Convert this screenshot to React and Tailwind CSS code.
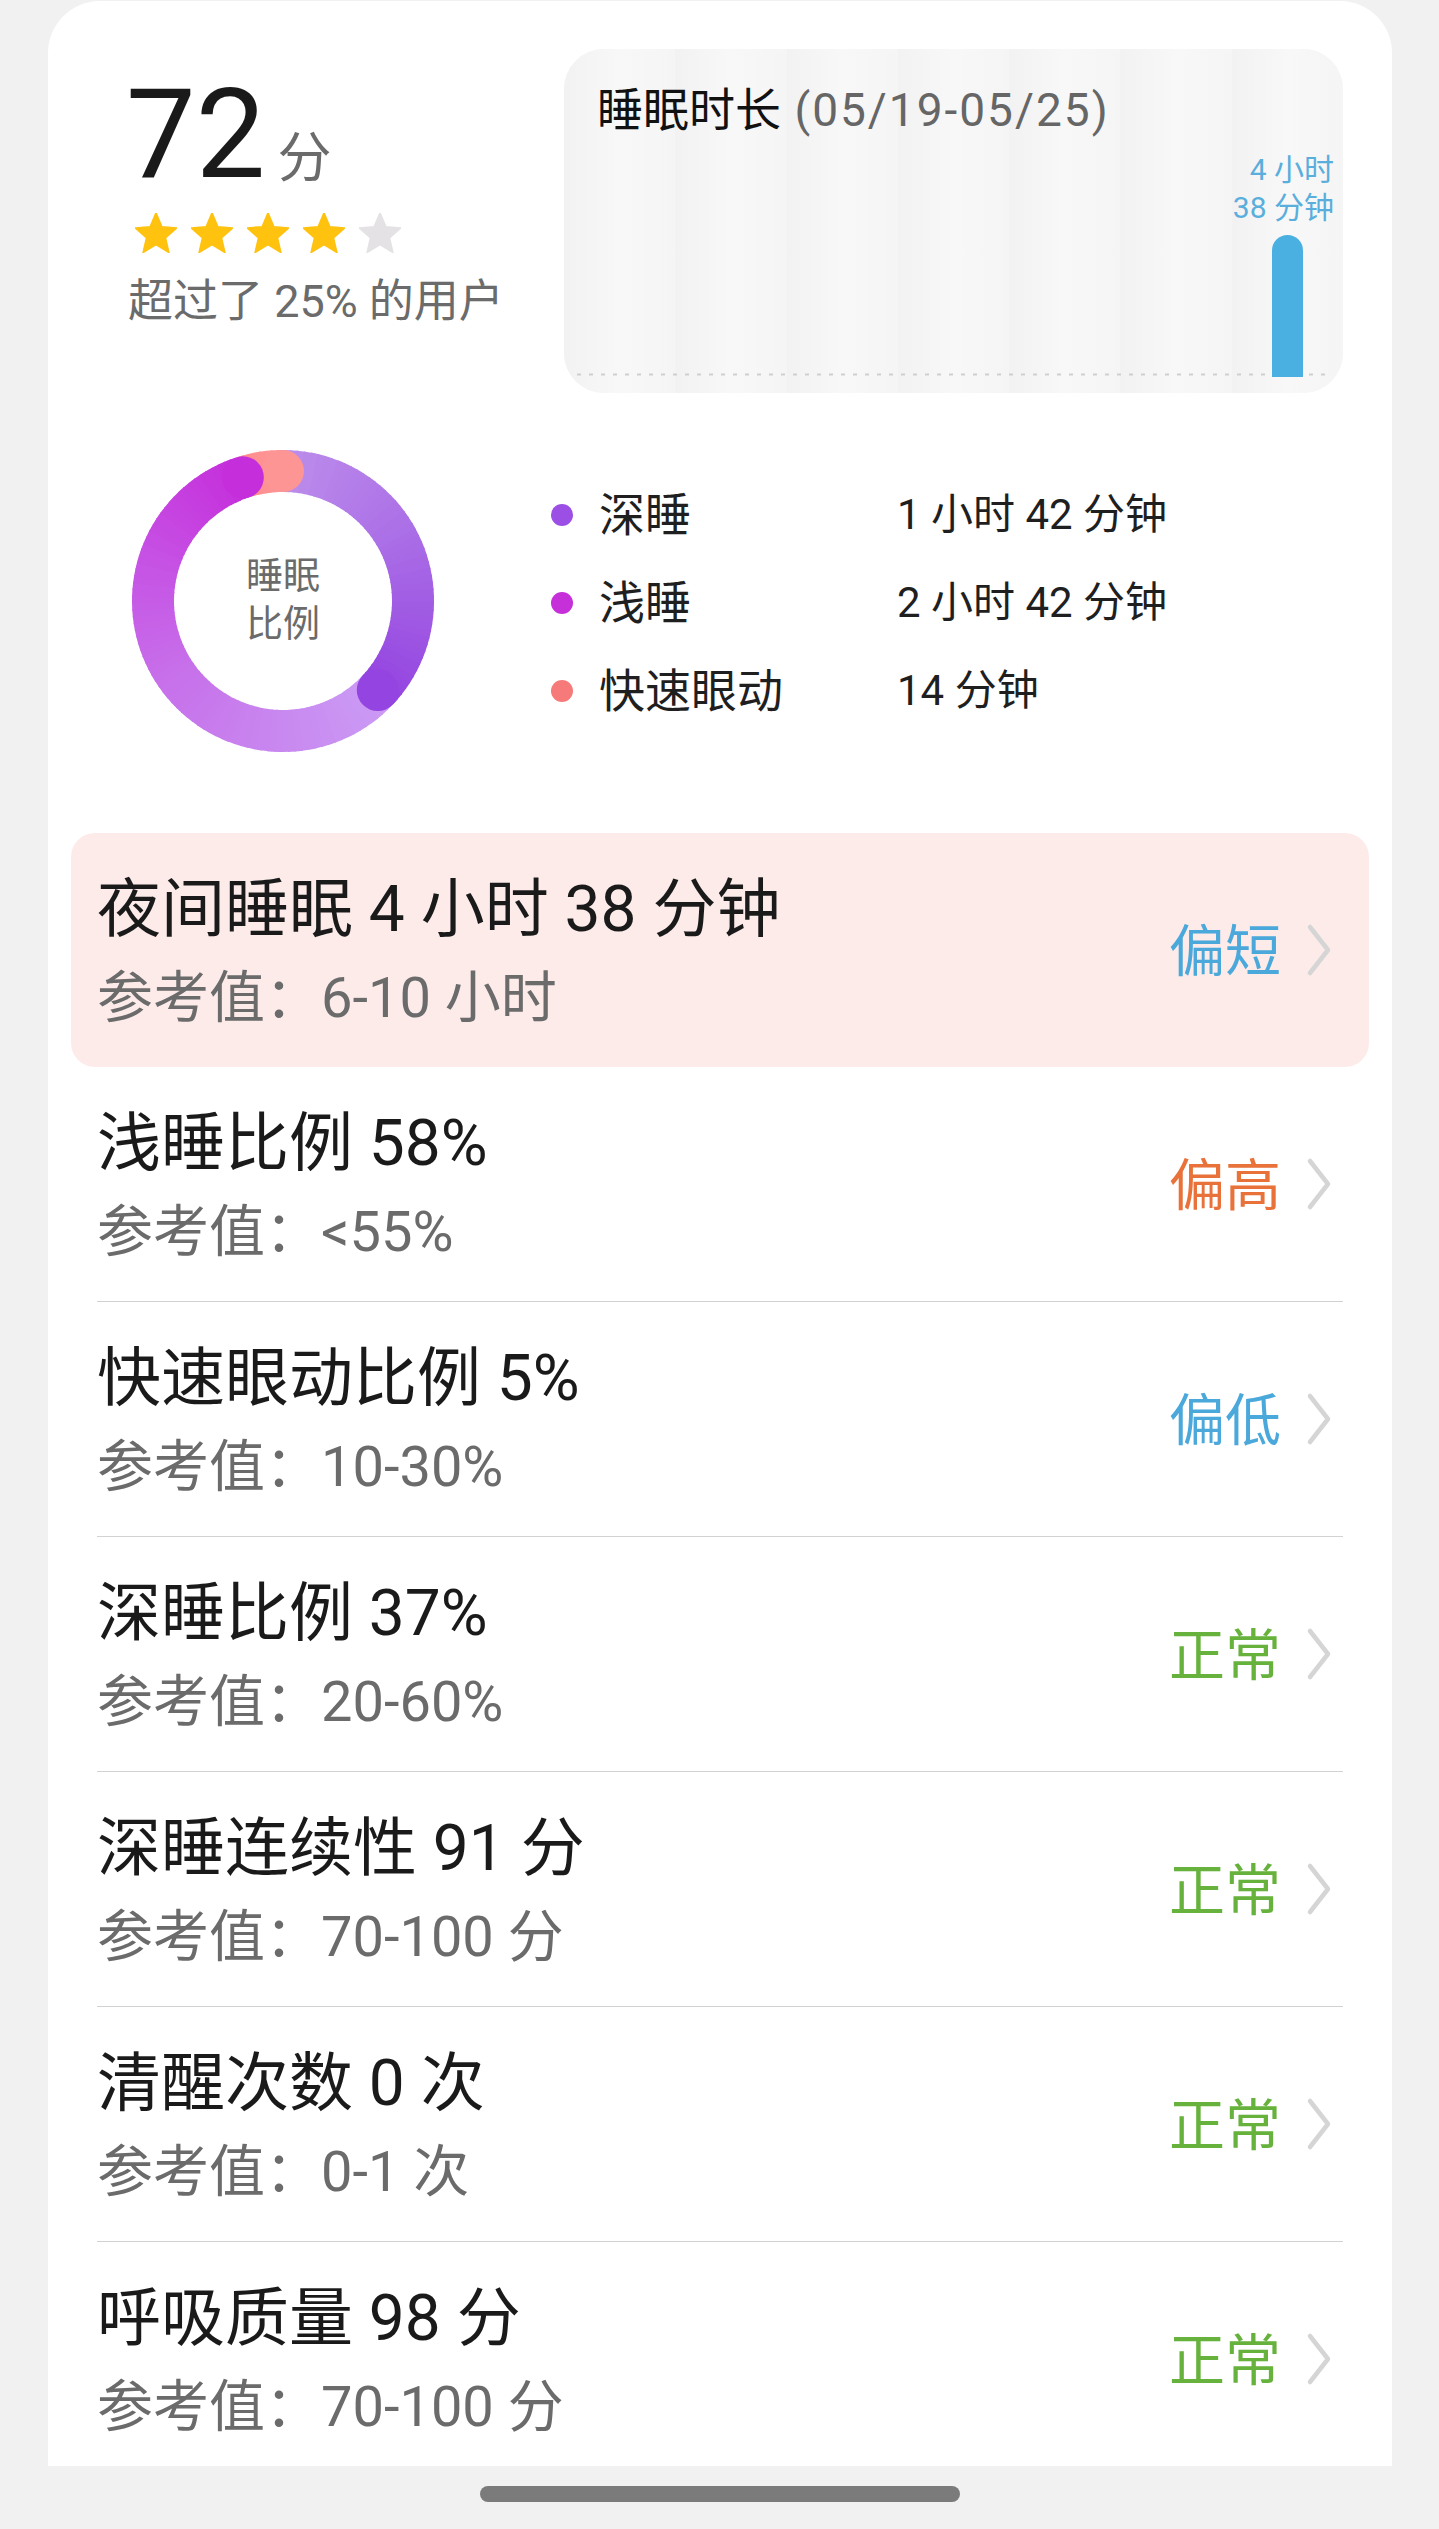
import React from "react";

const hexToRgb = (h) => [parseInt(h.slice(1, 3), 16), parseInt(h.slice(3, 5), 16), parseInt(h.slice(5, 7), 16)];
const rgbToHex = (c) => "#" + c.map((v) => Math.round(v).toString(16).padStart(2, "0")).join("");
const gradAt = (stops, t) => {
  for (let i = 0; i < stops.length - 1; i++) {
    const [c0, p0] = stops[i];
    const [c1, p1] = stops[i + 1];
    if (t <= p1 || i === stops.length - 2) {
      const k = Math.max(0, Math.min(1, (t - p0) / (p1 - p0)));
      const a = hexToRgb(c0);
      const b = hexToRgb(c1);
      return rgbToHex(a.map((v, j) => v + (b[j] - v) * k));
    }
  }
  return stops[0][0];
};

function Donut() {
  const cx = 151, cy = 151, r = 130, sw = 42;
  const pt = (deg) => {
    const a = (deg * Math.PI) / 180;
    return [cx + r * Math.sin(a), cy - r * Math.cos(a)];
  };
  const arc = (a0, a1) => {
    const [x0, y0] = pt(a0);
    const [x1, y1] = pt(a1);
    const large = a1 - a0 > 180 ? 1 : 0;
    return `M${x0} ${y0} A${r} ${r} 0 ${large} 1 ${x1} ${y1}`;
  };
  const segs = (key, a0, a1, stops, n) =>
    Array.from({ length: n }, (_, i) => {
      const s = a0 + ((a1 - a0) * i) / n;
      const e = Math.min(a0 + ((a1 - a0) * (i + 1)) / n + 0.6, a1);
      return <path key={key + i} d={arc(s, e)} stroke={gradAt(stops, (i + 0.5) / n)} strokeWidth={sw} fill="none" />;
    });
  const deepStops = [["#bc8eeb", 0], ["#a96be6", 0.5], ["#9444e0", 1]];
  const lightStops = [["#cb9cf5", 0], ["#c886ef", 0.25], ["#c76fea", 0.5], ["#c650e4", 0.75], ["#c52edb", 1]];
  const remStops = [["#ff8c8c", 0], ["#fd9797", 1]];
  const cap = (deg, color) => {
    const [x, y] = pt(deg);
    return <circle cx={x} cy={y} r={sw / 2} fill={color} />;
  };
  return (
    <div className="relative ml-[84px] w-[302px] h-[302px] shrink-0">
      <svg width="302" height="302" viewBox="0 0 302 302" className="absolute inset-0">
        {segs("l", 133.2, 342, lightStops, 80)}
        {segs("d", 0, 133.2, deepStops, 50)}
        {cap(133.2, "#9444e0")}
        {segs("r", 342, 360, remStops, 8)}
        {cap(360, "#fd9595")}
        {cap(342, "#c52edb")}
      </svg>
      <div className="absolute inset-0 flex flex-col items-center justify-center">
        <div className="text-[37px] leading-[48px] text-[#6b6b6b] text-center">
          睡眠
          <br />
          比例
        </div>
      </div>
    </div>
  );
}

function Star({ on }) {
  return (
    <svg width="42" height="40" viewBox="2 2 20 19.3">
      <path
        d="M12 17.27L18.18 21l-1.64-7.03L22 9.24l-7.19-.61L12 2 9.19 8.63 2 9.24l5.46 4.73L5.82 21z"
        fill={on ? "#ffc20f" : "#e4e2e4"}
        stroke={on ? "#ffc20f" : "#e4e2e4"}
        strokeWidth="0.8"
        strokeLinejoin="round"
      />
    </svg>
  );
}

function ChartPanel() {
  const cols = [0, 1, 2, 3, 4, 5];
  return (
    <div className="relative w-[779px] h-[344px] shrink-0 rounded-[40px] overflow-hidden bg-[#f5f5f5]">
      <div className="absolute inset-0 flex">
        {[0, 1, 2, 3, 4, 5, 6].map((i) => (
          <div key={i} className="flex-1 bg-linear-to-r from-[#f2f2f2] via-[#f8f8f8] to-[#f5f5f5]" />
        ))}
      </div>
      <svg className="absolute left-[13px] top-[324px]" width="756" height="3">
        <line x1="0" y1="1.5" x2="756" y2="1.5" stroke="#cfcfcf" strokeWidth="2" strokeDasharray="4 8" />
      </svg>
      <div className="relative flex flex-col h-full">
        <div className="pl-[33px] pt-[33px] text-[46px] leading-[56px] whitespace-nowrap">
          <span className="text-[#111111]">睡眠时长</span>
          <span className="text-[#666666] tracking-[2px]"> (05/19-05/25)</span>
        </div>
        <div className="flex-1 flex">
          {cols.map((i) => (
            <div key={i} className="flex-1" />
          ))}
          <div className="flex-1 flex flex-col items-center justify-end pb-[16px]">
            <div className="self-end pr-[9px] text-right text-[30px] leading-[38px] text-[#5aaedc] whitespace-nowrap">
              4 小时
              <br />
              38 分钟
            </div>
            <div className="mt-[8px] w-[31px] h-[142px] rounded-t-full bg-[#4aafe1]" />
          </div>
        </div>
      </div>
    </div>
  );
}

function Chevron() {
  return (
    <svg width="30" height="54" viewBox="0 0 30 54" className="ml-[23px] shrink-0">
      <path d="M6 4 L24 27 L6 50" fill="none" stroke="#d5d5d5" strokeWidth="4.5" strokeLinecap="round" strokeLinejoin="round" />
    </svg>
  );
}

const rows = [
  { title: "夜间睡眠 4 小时 38 分钟", sub: "参考值：6-10 小时", status: "偏短", color: "text-[#4ba8db]", hl: true },
  { title: "浅睡比例 58%", sub: "参考值：<55%", status: "偏高", color: "text-[#e8723a]" },
  { title: "快速眼动比例 5%", sub: "参考值：10-30%", status: "偏低", color: "text-[#4ba8db]" },
  { title: "深睡比例 37%", sub: "参考值：20-60%", status: "正常", color: "text-[#66b23c]" },
  { title: "深睡连续性 91 分", sub: "参考值：70-100 分", status: "正常", color: "text-[#66b23c]" },
  { title: "清醒次数 0 次", sub: "参考值：0-1 次", status: "正常", color: "text-[#66b23c]" },
  { title: "呼吸质量 98 分", sub: "参考值：70-100 分", status: "正常", color: "text-[#66b23c]" },
];

function Row({ r }) {
  return (
    <div className={`h-[234px] rounded-[24px] flex items-center pl-[26px] pr-[35px] ${r.hl ? "bg-[#fdebea]" : ""}`}>
      <div className="flex-1 self-start pt-[41px]">
        <div className="text-[64px] leading-[72px] text-[#1a1a1a] whitespace-nowrap">{r.title}</div>
        <div className="mt-[16px] text-[56px] leading-[72px] text-[#6b6b6b] whitespace-nowrap">{r.sub}</div>
      </div>
      <span className={`mt-[4px] text-[56px] leading-none ${r.color}`}>{r.status}</span>
      <Chevron />
    </div>
  );
}

const legend = [
  { dot: "bg-[#9b4fe4]", label: "深睡", value: "1 小时 42 分钟" },
  { dot: "bg-[#c630d9]", label: "浅睡", value: "2 小时 42 分钟" },
  { dot: "bg-[#f77a7a]", label: "快速眼动", value: "14 分钟" },
];

export default function App() {
  return (
    <div className="w-[1439px] h-[2529px] bg-[#f1f1f1] font-[Roboto,'Noto_Sans_CJK_SC',sans-serif] flex flex-col overflow-hidden">
      <div className="mt-px ml-[48px] w-[1344px] h-[2465px] shrink-0 bg-white rounded-t-[52px] overflow-hidden">
        <div className="flex pt-[48px] pr-[49px]">
          <div className="flex-1 pl-[78px] pt-[24px]">
            <div className="flex items-baseline">
              <span className="text-[124px] leading-none text-[#1a1a1a]">72</span>
              <span className="ml-[12px] text-[54px] leading-none text-[#6b6b6b]">分</span>
            </div>
            <div className="mt-[16px] ml-[9px] flex gap-[14px]">
              <Star on />
              <Star on />
              <Star on />
              <Star on />
              <Star />
            </div>
            <div className="mt-[23px] ml-[2px] text-[45px] leading-[52px] text-[#6b6b6b] whitespace-nowrap">超过了 25% 的用户</div>
          </div>
          <ChartPanel />
        </div>

        <div className="mt-[57px] flex items-center">
          <Donut />
          <div className="ml-[117px] pt-[4px] flex flex-col">
            {legend.map((l) => (
              <div key={l.label} className="h-[88px] flex items-center">
                <span className={`w-[22px] h-[22px] rounded-full ${l.dot}`} />
                <span className="ml-[26px] w-[298px] text-[46px] leading-none text-[#1f1f1f]">{l.label}</span>
                <span className="text-[42px] leading-none text-[#1f1f1f] whitespace-nowrap">{l.value}</span>
              </div>
            ))}
          </div>
        </div>

        <div className="mt-[81px] px-[23px]">
          {rows.map((r, i) => (
            <React.Fragment key={i}>
              {i > 1 && <div className="mx-[26px] h-px bg-[#d2d2d2]" />}
              <Row r={r} />
            </React.Fragment>
          ))}
        </div>
      </div>
      <div className="mt-[20px] ml-[480px] w-[480px] h-[16px] shrink-0 rounded-full bg-[#7b7b7b]" />
    </div>
  );
}
